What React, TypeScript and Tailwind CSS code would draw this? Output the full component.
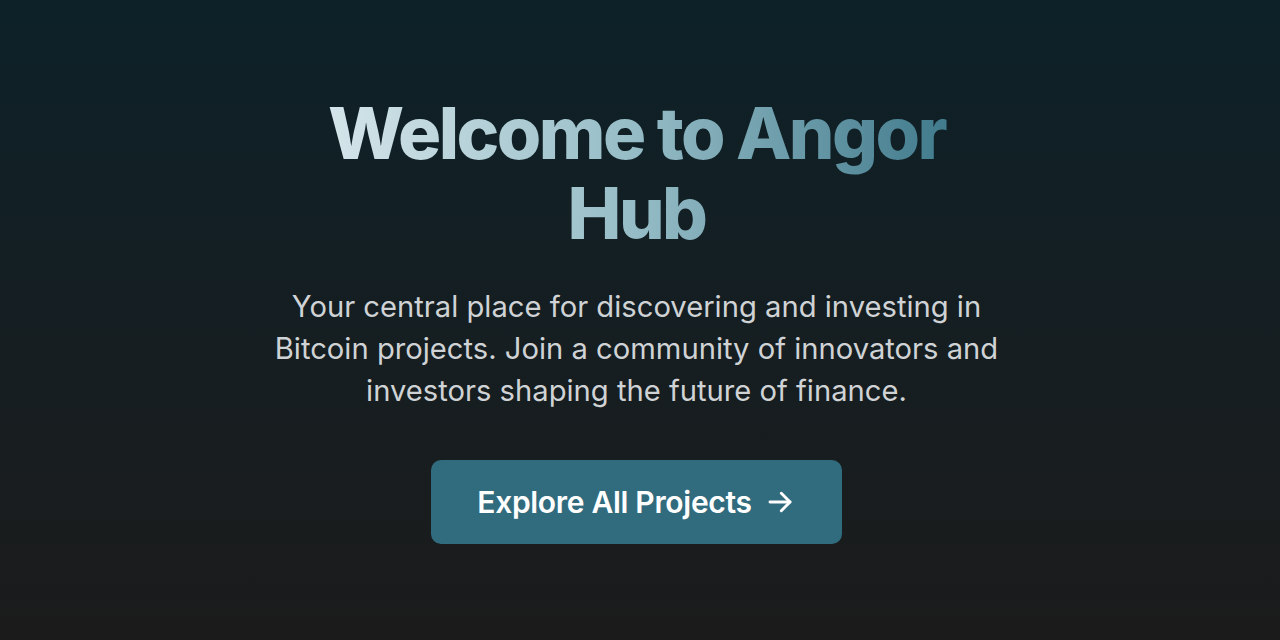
import React from "react";

export default function App() {
  return (
    <div
      className="w-full h-[640px] bg-gradient-to-b from-[#0c2128] to-[#1b1b1b] flex flex-col items-center pr-[7px]"
      style={{ fontFamily: "Inter, 'Noto Sans', sans-serif" }}
    >
      <h1 className="mt-[93px] w-[660px] text-center text-[72px] leading-[80px] font-extrabold tracking-[-0.036em] bg-gradient-to-r from-[#d9e8ec] via-[#95bcc6] to-[#3b7789] bg-clip-text text-transparent">
        Welcome to Angor Hub
      </h1>
      <p className="mt-[33px] w-[740px] text-center text-[29.2px] leading-[42px] text-[#d0d3d5]">
        Your central place for discovering and investing in Bitcoin projects. Join a community of innovators and investors shaping the future of finance.
      </p>
      <button className="mt-[48px] w-[411px] h-[84px] rounded-[10px] bg-[#316b7e] flex items-center justify-center gap-[12px] text-white text-[30px] font-semibold tracking-[-0.01em]">
        <span>Explore All Projects</span>
        <svg width="32" height="32" viewBox="0 0 24 24" fill="none" stroke="currentColor" strokeWidth="2.2" strokeLinecap="round" strokeLinejoin="round">
          <path d="M4.5 12h15" />
          <path d="M13 5.5l6.5 6.5-6.5 6.5" />
        </svg>
      </button>
    </div>
  );
}
